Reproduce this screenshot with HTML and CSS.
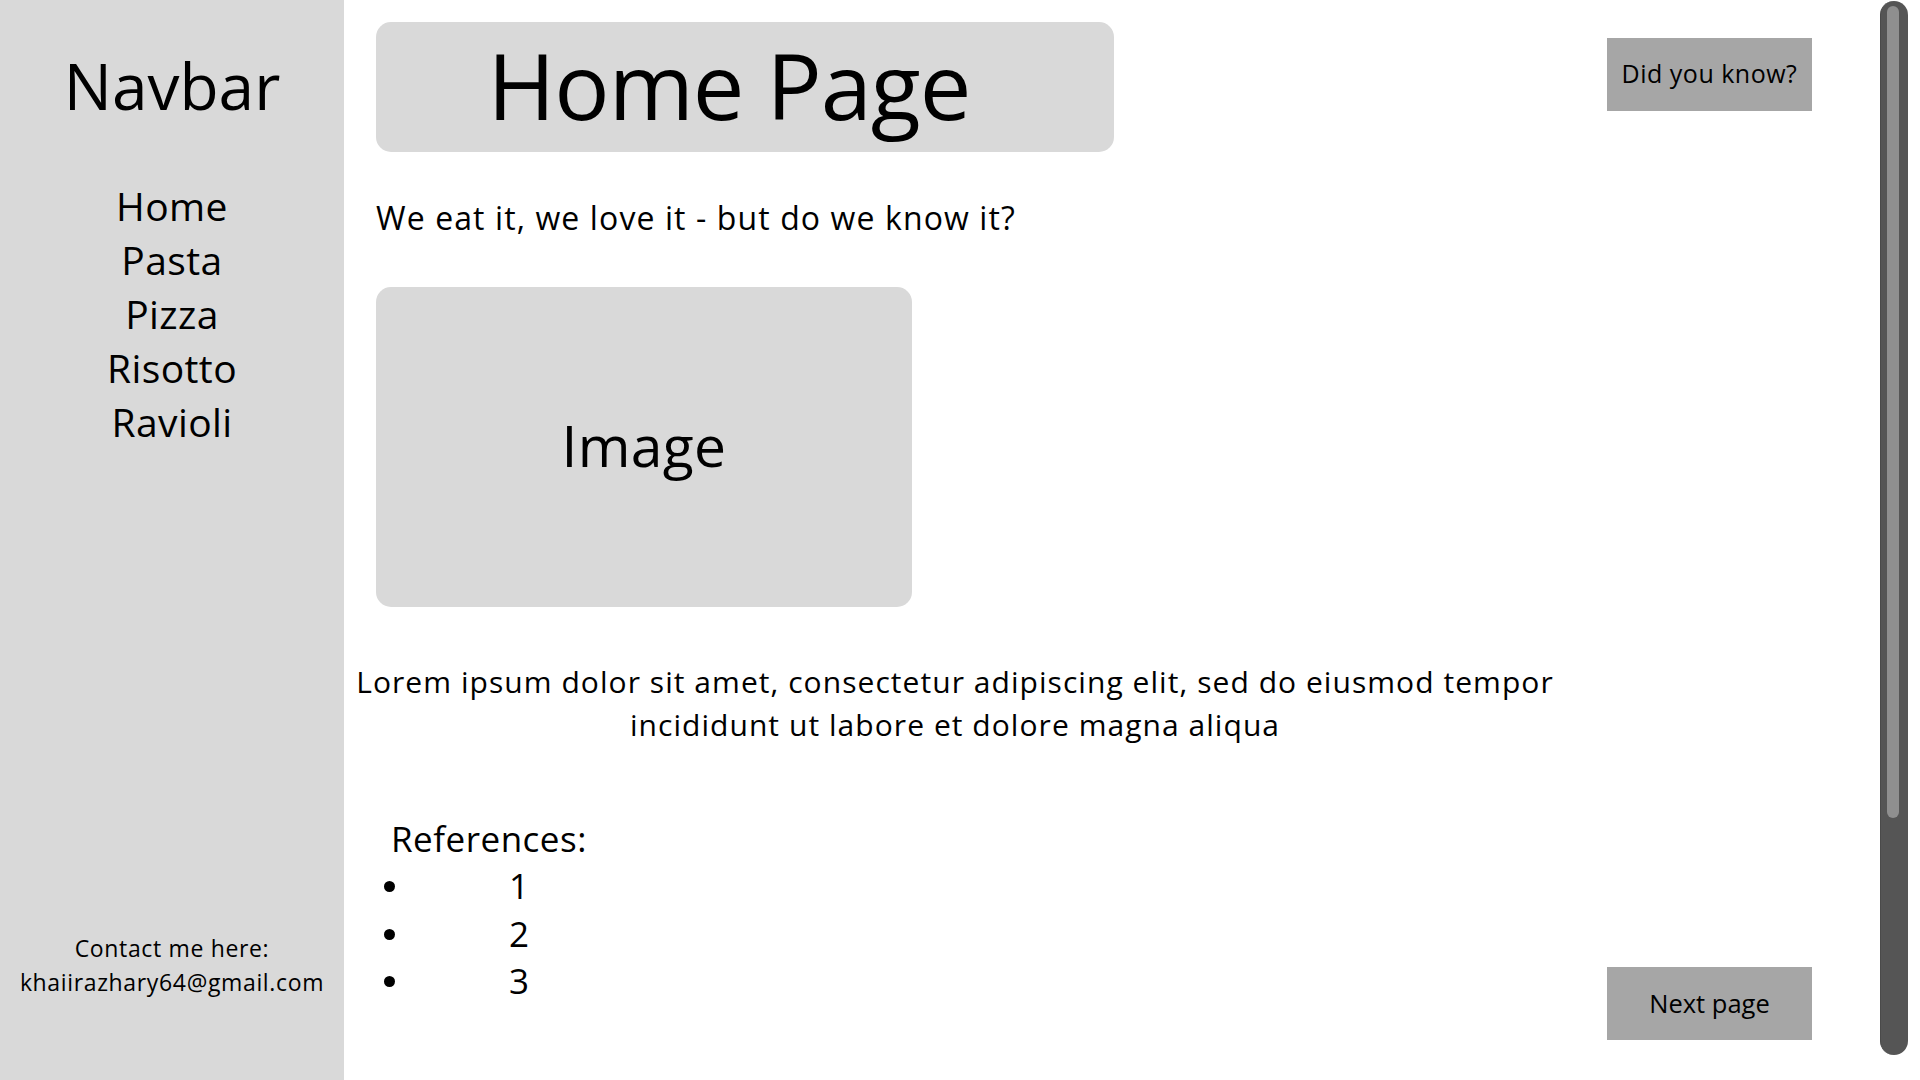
FILE: index.html
```html
<!DOCTYPE html>
<html lang="en">
<head>
<meta charset="utf-8">
<title>Home Page</title>
<link rel="stylesheet" href="styles.css">
</head>
<body>
<div class="page">
  <aside class="sidebar">
    <h2 class="brand">Navbar</h2>
    <nav class="nav">
      <a href="#">Home</a>
      <a href="#">Pasta</a>
      <a href="#">Pizza</a>
      <a href="#">Risotto</a>
      <a href="#">Ravioli</a>
    </nav>
    <div class="contact">
      <div>Contact me here:</div>
      <div>khaiirazhary64@gmail.com</div>
    </div>
  </aside>

  <main class="content">
    <div class="top-row">
      <h1 class="title-box">Home Page</h1>
      <button class="btn btn-know">Did you know?</button>
    </div>
    <p class="tagline">We eat it, we love it - but do we know it?</p>
    <div class="image-box">Image</div>
    <p class="lorem">Lorem ipsum dolor sit amet, consectetur adipiscing elit, sed do eiusmod tempor incididunt ut labore et dolore magna aliqua</p>
    <div class="bottom-row">
      <div class="refs">
        <div class="refs-title">References:</div>
        <ul class="refs-list">
          <li>1</li>
          <li>2</li>
          <li>3</li>
        </ul>
      </div>
      <button class="btn btn-next">Next page</button>
    </div>
  </main>

  <div class="scroll">
    <div class="scroll-track"><div class="scroll-thumb"></div></div>
  </div>
</div>
</body>
</html>
```
FILE: styles.css
```css
* { box-sizing: border-box; }
html, body { margin: 0; padding: 0; }
body {
  width: 1920px;
  height: 1080px;
  overflow: hidden;
  background: #ffffff;
  color: #000000;
  font-family: "Open Sans", "Noto Sans", sans-serif;
}
.page {
  display: flex;
  height: 1080px;
}

/* Sidebar */
.sidebar {
  width: 344px;
  flex: 0 0 344px;
  background: #d9d9d9;
  display: flex;
  flex-direction: column;
  align-items: center;
  padding: 48px 0 0;
}
.brand {
  margin: 0;
  font-weight: 400;
  font-size: 64px;
  line-height: 76.8px;
}
.nav {
  margin-top: 54px;
  display: flex;
  flex-direction: column;
  align-items: center;
}
.nav a {
  color: #000;
  text-decoration: none;
  font-size: 39px;
  line-height: 54px;
  letter-spacing: 0.4px;
}
.contact {
  margin-top: auto;
  margin-bottom: 81px;
  text-align: center;
  font-size: 23px;
  line-height: 34px;
  letter-spacing: 0.65px;
}

/* Main */
.content {
  flex: 1;
  display: flex;
  flex-direction: column;
  padding: 22px 68px 0 32px;
}
.top-row {
  display: flex;
  justify-content: space-between;
  align-items: flex-start;
}
.title-box {
  margin: 0;
  width: 738px;
  height: 130px;
  background: #d9d9d9;
  border-radius: 15px;
  font-weight: 400;
  font-size: 92px;
  letter-spacing: -1px;
  line-height: 126px;
  text-align: center;
  padding-right: 32px;
}
.btn {
  border: 0;
  background: #a6a6a6;
  color: #000;
  font-family: "Open Sans", "Noto Sans", sans-serif;
  width: 205px;
  height: 73px;
  padding: 0;
  border-radius: 0;
}
.btn-know {
  margin-top: 16px;
  font-size: 25px;
  letter-spacing: 0.5px;
  padding-bottom: 3px;
}
.btn-next {
  margin-top: 152px;
  font-size: 25.5px;
  padding-bottom: 1px;
}
.tagline {
  margin: 46px 0 0;
  font-size: 32px;
  line-height: 40px;
  letter-spacing: 1.1px;
}
.image-box {
  margin-top: 49px;
  width: 536px;
  height: 320px;
  background: #d9d9d9;
  border-radius: 15px;
  display: flex;
  align-items: center;
  justify-content: center;
  font-size: 57px;
  letter-spacing: 0.3px;
  padding-bottom: 4px;
}
.lorem {
  margin: 53px 0 0 -41px;
  width: 1240px;
  text-align: center;
  font-size: 30px;
  line-height: 43px;
  letter-spacing: 1.05px;
}
.bottom-row {
  margin-top: 69px;
  display: flex;
  justify-content: space-between;
  align-items: flex-start;
}
.refs-title {
  margin-left: 15px;
  font-size: 35px;
  line-height: 47px;
  letter-spacing: 0.5px;
}
.refs-list {
  list-style: none;
  margin: 0 0 0 8px;
  padding: 0;
}
.refs-list li {
  display: flex;
  align-items: center;
  font-size: 35px;
  line-height: 47.5px;
}
.refs-list li::before {
  content: "";
  width: 11px;
  height: 11px;
  border-radius: 50%;
  background: #000;
  margin-right: 114px;
  margin-top: 2px;
}

/* Decorative scrollbar */
.scroll {
  width: 40px;
  flex: 0 0 40px;
  padding-top: 1px;
}
.scroll-track {
  width: 28px;
  height: 1054px;
  background: #555555;
  border-left: 1px solid #4a4a4a;
  border-radius: 14px;
  padding: 5px 9px 0 6px;
}
.scroll-thumb {
  width: 12px;
  height: 812px;
  background: #8f8f8f;
  border-radius: 6px;
}
```
